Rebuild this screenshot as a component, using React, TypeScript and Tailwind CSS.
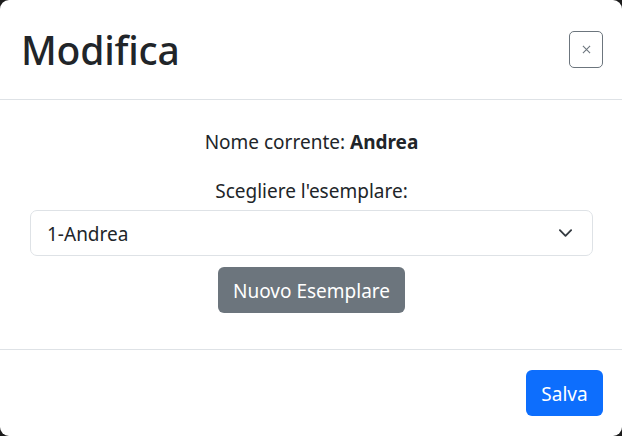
import React from 'react';

const font = { fontFamily: '"Noto Sans", "Open Sans", sans-serif' };

export default function App() {
  return (
    <div className="w-[622px] h-[436px] bg-[#1c1c1c]" style={font}>
      <div className="w-full h-full bg-white rounded-[9px] overflow-hidden flex flex-col text-[#212529]">
        {/* header */}
        <div className="h-[100px] shrink-0 flex items-center justify-between pl-[21px] pr-[19px] border-b border-[#dee2e6]">
          <h1 className="text-[39px] font-medium leading-none tracking-[-0.2px]">Modifica</h1>
          <button className="w-[34px] h-[37px] border border-[#6c757d] rounded-[5px] flex items-center justify-center text-[#6c757d]">
            <svg width="9" height="9" viewBox="0 0 10 10" fill="none" stroke="currentColor" strokeWidth="1.2">
              <path d="M1 1l8 8M9 1l-8 8" />
            </svg>
          </button>
        </div>

        {/* body */}
        <div className="flex-1 flex flex-col items-center pt-[28px] pl-[30px] pr-[29px] text-[19px] leading-[29px]">
          <p className="mb-[20px]">
            Nome corrente: <b className="font-bold">Andrea</b>
          </p>
          <label className="mb-[4px]">Scegliere l'esemplare:</label>
          <div className="w-full h-[46px] border border-[#dee2e6] rounded-[7px] flex items-center justify-between pl-[16px] pr-[19px]">
            <span className="pt-[3px]">1-Andrea</span>
            <svg width="15" height="10" viewBox="0 0 16 10" fill="none" stroke="#343a40" strokeWidth="2" strokeLinecap="round" strokeLinejoin="round">
              <path d="M2 2l6 6 6-6" />
            </svg>
          </div>
          <button className="mt-[11px] h-[46px] w-[187px] rounded-[6px] bg-[#6c757d] text-white pt-[2px]">
            Nuovo Esemplare
          </button>
        </div>

        {/* footer */}
        <div className="h-[87px] shrink-0 border-t border-[#dee2e6] flex items-center justify-end pr-[19px]">
          <button className="h-[46px] w-[77px] rounded-[6px] bg-[#0d6efd] text-white text-[19px] pt-[2px]">Salva</button>
        </div>
      </div>
    </div>
  );
}
